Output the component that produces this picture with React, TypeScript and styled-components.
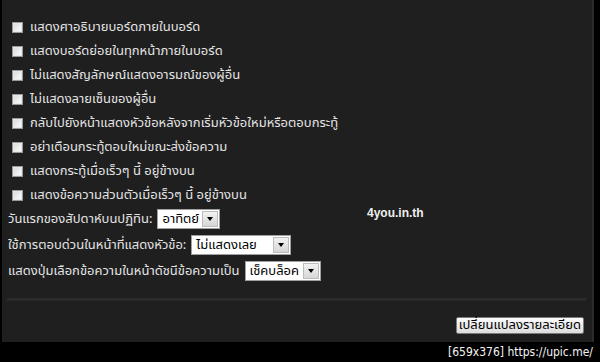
import React from 'react'
import styled, { createGlobalStyle } from 'styled-components'

const Global = createGlobalStyle`
    html, body {
        margin: 0;
        padding: 0;
        background: #000;
    }
    body {
        width: 600px;
        height: 362px;
        overflow: hidden;
        font-family: Tahoma, "Noto Sans Thai", "Noto Sans", "DejaVu Sans", sans-serif;
    }
`;

const Panel = styled.div`
    margin-left: 2px;
    width: 592px;
    height: 342px;
    background: #1f1f1f;
    border-right: 2px solid #2b2b2b;
    box-sizing: border-box;
    display: flex;
    flex-direction: column;
`;

const Options = styled.div`
    display: flex;
    flex-direction: column;
    padding: 15px 0 0 10px;
`;

const CheckRow = styled.label`
    display: flex;
    align-items: center;
    gap: 7px;
    height: 24px;
    color: #e4e4e4;
    font-size: 13px;
`;

const Box = styled.span`
    width: 11px;
    height: 11px;
    box-sizing: border-box;
    border: 1px solid #9a9a9a;
    background: linear-gradient(135deg, #d8d8d8 0%, #f4f4f4 70%, #ffffff 100%);
    box-shadow: inset 0 0 0 1px #e8e8e8;
`;

const SelectList = styled.div`
    margin-top: -1px;
`;

const SelectRow = styled.div`
    display: flex;
    align-items: center;
    height: 26px;
    color: #e4e4e4;
    font-size: 13px;
    gap: 5px;
    position: relative;
    padding-left: 6px;
    white-space: nowrap;
`;

const Select = styled.div<{ w: number }>`
    width: ${p => p.w}px;
    height: 20px;
    box-sizing: border-box;
    background: #fff;
    border: 1px solid #a0a0a0;
    display: flex;
    align-items: center;
    justify-content: space-between;
    gap: 3px;
    color: #000;
    font-size: 13px;
    padding: 0 1px 0 4px;
    white-space: nowrap;
    overflow: hidden;
`;

const Arrow = styled.span`
    flex-shrink: 0;
    width: 16px;
    height: 16px;
    box-sizing: border-box;
    background: linear-gradient(#f2f2f2, #d6d6d6);
    border: 1px solid #bcbcbc;
    display: flex;
    align-items: center;
    justify-content: center;

    &::after {
        content: '';
        border-left: 3px solid transparent;
        border-right: 3px solid transparent;
        border-top: 4px solid #000;
    }
`;

const Site = styled.span`
    position: absolute;
    left: 365px;
    top: 0;
    color: #f0f0f0;
    font-weight: bold;
    font-size: 12px;
    font-family: "Liberation Sans", Arial, sans-serif;
`;

const Divider = styled.div`
    margin: 14px 6px 0 5px;
    height: 2px;
    background: #2c2c2c;
    border-bottom: 1px solid #262626;
`;

const Footer = styled.div`
    display: flex;
    justify-content: flex-end;
    padding: 16px 8px 0 0;
`;

const Button = styled.button`
    height: 17px;
    padding: 0 2px;
    font-family: inherit;
    font-size: 13px;
    line-height: 13px;
    color: #000;
    background: linear-gradient(#fbfbfb, #dcdcdc);
    border: 1px solid #7a7a7a;
    border-radius: 2px;
`;

const Watermark = styled.div`
    height: 20px;
    display: flex;
    align-items: center;
    justify-content: flex-end;
    padding-right: 7px;
    color: #f4f4f4;
    font-size: 12px;
    font-family: "DejaVu Sans Condensed", "DejaVu Sans", sans-serif;
`;

const checks = [
    'แสดงศาอธิบายบอร์ดภายในบอร์ด',
    'แสดงบอร์ดย่อยในทุกหน้าภายในบอร์ด',
    'ไม่แสดงสัญลักษณ์แสดงอารมณ์ของผู้อื่น',
    'ไม่แสดงลายเซ็นของผู้อื่น',
    'กลับไปยังหน้าแสดงหัวข้อหลังจากเริ่มหัวข้อใหม่หรือตอบกระทู้',
    'อย่าเตือนกระทู้ตอบใหม่ขณะส่งข้อความ',
    'แสดงกระทู้เมื่อเร็วๆ นี้ อยู่ข้างบน',
    'แสดงข้อความส่วนตัวเมื่อเร็วๆ นี้ อยู่ข้างบน',
]

const App = () => (
    <>
        <Global />
        <Panel>
            <Options>
                {checks.map(t => (
                    <CheckRow key={t}>
                        <Box />
                        {t}
                    </CheckRow>
                ))}
            </Options>
            <SelectList>
                <SelectRow>
                    วันแรกของสัปดาห์บนปฏิทิน:
                    <Select w={63}>อาทิตย์<Arrow /></Select>
                    <Site>4you.in.th</Site>
                </SelectRow>
                <SelectRow>
                    ใช้การตอบด่วนในหน้าที่แสดงหัวข้อ:
                    <Select w={100}>ไม่แสดงเลย<Arrow /></Select>
                </SelectRow>
                <SelectRow>
                    แสดงปุ่มเลือกข้อความในหน้าดัชนีข้อความเป็น
                    <Select w={76}>เช็คบล็อค<Arrow /></Select>
                </SelectRow>
            </SelectList>
            <Divider />
            <Footer>
                <Button>เปลี่ยนแปลงรายละเอียด</Button>
            </Footer>
        </Panel>
        <Watermark>[659x376] https://upic.me/</Watermark>
    </>
)

export default App
